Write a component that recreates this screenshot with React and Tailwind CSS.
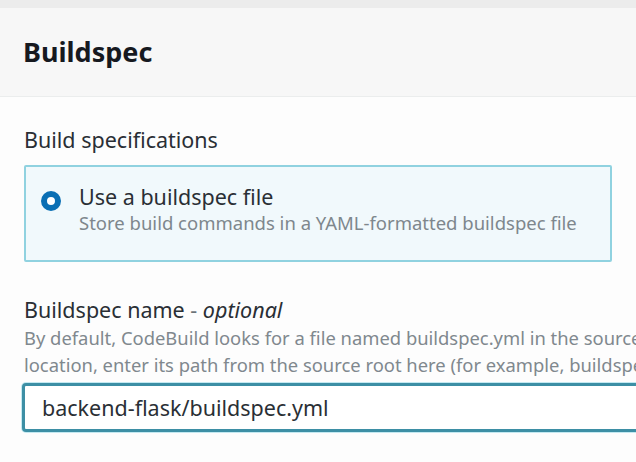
const font = { fontFamily: '"Noto Sans", "Open Sans", sans-serif' };

export default function App() {
  return (
    <div className="w-[636px] h-[462px] overflow-hidden bg-[#fdfdfd] text-[#1f2429]" style={font}>
      <div className="h-[8px] bg-[#ececec]" />
      <div className="h-[89px] bg-[#f7f7f7] border-b border-[#ebeded] px-[23px] pt-[26px]">
        <h2 className="text-[27px] font-bold leading-[36px] text-[#16191f]">Buildspec</h2>
      </div>
      <div className="px-[24px] pt-[29px]">
        <div className="text-[21.5px] leading-[28px] text-[#2a2f35]">Build specifications</div>
        <div className="mt-[11px] w-[588px] h-[97px] bg-[#f1f9fc] border-2 border-[#90d2e0] rounded-[2px] flex items-start pl-[15px] pt-[16px]">
          <span className="mt-[8px] w-[20px] h-[20px] rounded-full border-[6px] border-[#0a6fb4] bg-white shrink-0" />
          <div className="ml-[18px]">
            <div className="text-[21.5px] leading-[28px] text-[#2a2f35]">Use a buildspec file</div>
            <div className="text-[18.5px] leading-[24px] text-[#7e878d]">
              Store build commands in a YAML-formatted buildspec file
            </div>
          </div>
        </div>
        <div className="mt-[34px] text-[21.5px] leading-[28px] text-[#2a2f35] whitespace-nowrap">
          Buildspec name <span className="text-[#6b7378]">-</span> <i>optional</i>
        </div>
        <div className="text-[18.4px] leading-[27px] text-[#80888e] whitespace-nowrap">
          <div>By default, CodeBuild looks for a file named buildspec.yml in the source root. If your buildspec file uses a different name or</div>
          <div>location, enter its path from the source root here (for example, buildspec-two.yml).</div>
        </div>
        <div className="mt-[5px] -ml-[2px] w-[640px] h-[49px] border-[3px] border-[#3d8fa5] rounded-[4px] bg-white flex items-center pl-[17px] shadow-[0_0_0_1px_#c4e9f1]">
          <span className="text-[21.5px] leading-[28px] text-[#2a2f35]">backend-flask/buildspec.yml</span>
        </div>
      </div>
    </div>
  );
}
